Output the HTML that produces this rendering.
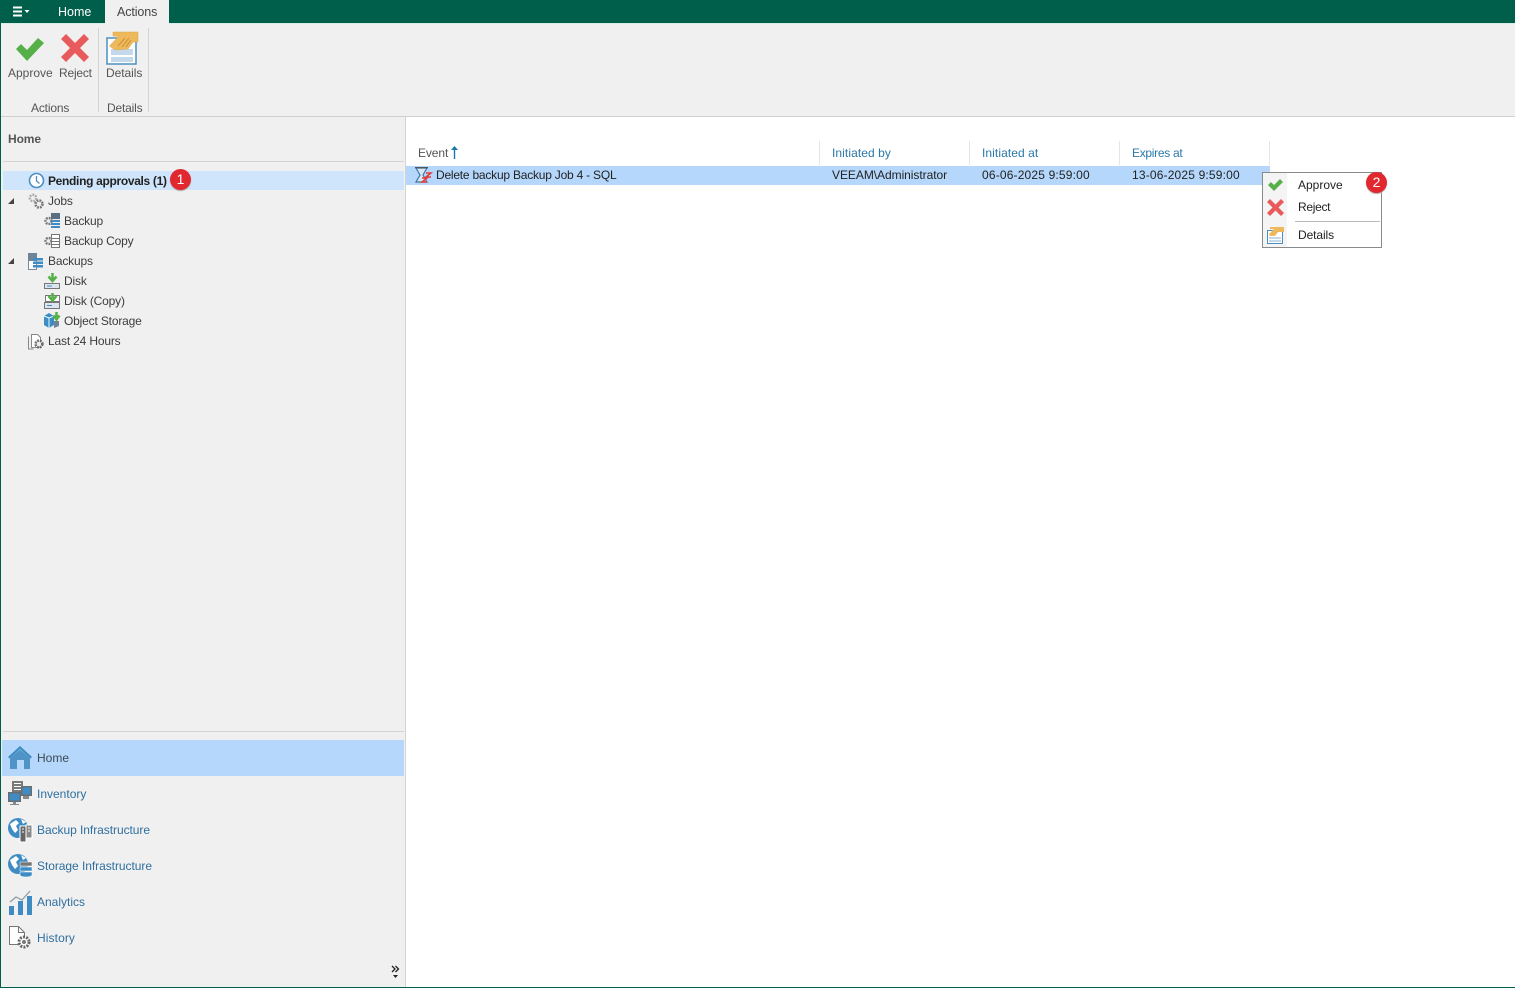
<!DOCTYPE html>
<html><head><meta charset="utf-8"><style>
html,body{margin:0;padding:0;background:#fff}
#r{position:relative;width:1515px;height:988px;overflow:hidden;background:#fff;font:12px "Liberation Sans",sans-serif;color:#3c3c3c}
#r div,#r svg{position:absolute}
.t{white-space:nowrap;line-height:14px}
.b{color:#2f6f9f}
.h{color:#2a78a8}
.k{color:#222}
.g{color:#555}
.s{letter-spacing:-.17px}
.n{width:21px;height:21px;border-radius:50%;background:#e0282e;color:#fff;font-size:14px;line-height:20px;text-align:center;box-shadow:0 1px 1px #aaa}
</style></head><body><div id="r">
<div style="left:0;top:0;width:1515px;height:23px;background:#005f4b"></div>
<div style="left:0;top:23px;width:1515px;height:94px;background:#f0f0f0;border-bottom:1px solid #cfcfcf;box-sizing:border-box"></div>
<div style="left:0;top:23px;width:1515px;height:1px;background:#d5eee8"></div>
<div style="left:0;top:117px;width:405px;height:871px;background:#f0f0f0;border-right:1px solid #d4d4d4"></div>
<div style="left:0;top:23px;width:1px;height:965px;background:#005f4b"></div>
<div style="left:0;top:987px;width:1515px;height:1px;background:#005f4b"></div>

<svg style="left:12px;top:6px" width="18" height="11"><path d="M1 .5h9v2H1zM1 4.500h9v2H1zM1 8.500h9v2H1z" fill="#fff"/><path d="M12.500 4h5l-2.500 3z" fill="#fff"/></svg>
<div class="t" style="left:58px;top:5px;color:#fff;font-size:12.500px">Home</div>
<div style="left:105px;top:0;width:64px;height:24px;background:#f0f0f0"></div>
<div class="t" style="left:117px;top:5px;color:#444;font-size:12.500px;letter-spacing:-.1px">Actions</div>

<svg style="left:15px;top:36px" width="30" height="26"><path d="M1 13l5-5 6 6L23 2l6 5-17 18z" fill="#55b047"/></svg>
<svg style="left:60px;top:33px" width="30" height="30"><path d="M6 1l9 9 9-9 5 5-9 9 9 9-5 5-9-9-9 9-5-5 9-9-9-9z" fill="#e85a5c"/></svg>
<div class="t g" style="left:8px;top:66px">Approve</div>
<div class="t g" style="left:59px;top:66px;letter-spacing:-.2px">Reject</div>
<div class="t g s" style="left:31px;top:101px">Actions</div>
<div style="left:98px;top:28px;width:1px;height:84px;background:#d4d4d4"></div>
<svg style="left:106px;top:31px" width="34" height="35"><rect x="1" y="7" width="29" height="26" fill="#fff" stroke="#4a8fc0" stroke-width="1.500"/><rect x="5" y="18" width="22" height="6" fill="#c4d8ec"/><rect x="5" y="26" width="22" height="5" fill="#c4d8ec"/><path d="M7 1h25v10h-5l-5 7-13 1-5.500-4L10 8l2-3H7z" fill="#eeb85d" stroke="#dda445" stroke-width=".5"/><path d="M12 15l7-8M16 16l7-9M20 16l5-7" stroke="#c99335" fill="none"/></svg>
<div class="t g" style="left:106px;top:66px;letter-spacing:-.05px">Details</div>
<div class="t g s" style="left:107px;top:101px">Details</div>
<div style="left:148px;top:28px;width:1px;height:84px;background:#d4d4d4"></div>

<div class="t" style="left:8px;top:132px;font-weight:bold;color:#555;font-size:12px;letter-spacing:-.1px">Home</div>
<div style="left:3px;top:161px;width:401px;height:1px;background:#d4d4d4"></div>
<div style="left:3px;top:171px;width:401px;height:19px;background:#cfe5fb"></div>
<svg style="left:28px;top:172px" width="17" height="17"><circle cx="8.500" cy="8.500" r="7" fill="#fff" stroke="#4a8fc0" stroke-width="1.600"/><path d="M8.500 4v5l3 2.500" fill="none" stroke="#4a8fc0" stroke-width="1.300"/></svg>
<div class="t k" style="left:48px;top:174px;font-weight:bold;letter-spacing:-.32px">Pending approvals (1)</div>
<div class="n" style="left:170px;top:169px">1</div>
<svg style="left:7px;top:197px" width="8" height="8"><path d="M7 1v6H1z" fill="#444"/></svg>
<svg style="left:7px;top:257px" width="8" height="8"><path d="M7 1v6H1z" fill="#444"/></svg>

<svg style="left:28px;top:193px" width="17" height="17"><circle cx="5" cy="5" r="3.200" fill="#eee" stroke="#aaa" stroke-width="2.400" stroke-dasharray="1.800 1"/><circle cx="11" cy="11" r="3.500" fill="#eee" stroke="#777" stroke-width="2.600" stroke-dasharray="1.800 1"/></svg>
<div class="t s" style="left:48px;top:194px">Jobs</div>
<svg style="left:44px;top:213px" width="17" height="16"><circle cx="4.500" cy="8" r="3" fill="#eee" stroke="#777" stroke-width="2.400" stroke-dasharray="1.800 1"/><rect x="7" y="0" width="9" height="6" fill="#5a6f80"/><path d="M7 7h9v2H7zM7 10h9v2H7zM7 13h9v2H7z" fill="#3f8cc4"/></svg>
<div class="t s" style="left:64px;top:214px">Backup</div>
<svg style="left:44px;top:233px" width="17" height="16"><circle cx="4.500" cy="8" r="3" fill="#eee" stroke="#777" stroke-width="2.400" stroke-dasharray="1.800 1"/><path d="M7.500 1.500h8v13h-8zM7.500 5.500h8M7.500 8.500h8M7.500 11.500h8" fill="#fff" stroke="#777"/></svg>
<div class="t s" style="left:64px;top:234px">Backup Copy</div>
<svg style="left:27px;top:253px" width="17" height="17"><rect x="1" y="0" width="9" height="7" fill="#6f8496"/><rect x="1.500" y="7.500" width="8" height="9" fill="#fff" stroke="#7a8a98"/><path d="M6 5h10v2.500H6zM6 8.500h10V11H6zM6 12h10v2.500H6z" fill="#3f8cc4"/></svg>
<div class="t s" style="left:48px;top:254px">Backups</div>
<svg style="left:44px;top:273px" width="17" height="16"><path d="M8.500 0v6M4.500 3.500l4 4.500 4-4.500" fill="none" stroke="#55b047" stroke-width="2.500"/><path d="M.5 10.500h15v5H.5z" fill="#dde6ee" stroke="#777"/><path d="M3 13h5" stroke="#3f8cc4"/></svg>
<div class="t s" style="left:64px;top:274px">Disk</div>
<svg style="left:44px;top:293px" width="17" height="17"><rect x="1.500" y="2.500" width="14" height="6" fill="#fff" stroke="#777"/><path d="M8.500 0v5M4.500 3l4 4.500 4-4.500" fill="none" stroke="#55b047" stroke-width="2.500"/><path d="M.5 9.500h15v6H.5z" fill="#dde6ee" stroke="#777"/><path d="M3 12.500h5" stroke="#3f8cc4"/></svg>
<div class="t s" style="left:64px;top:294px">Disk (Copy)</div>
<svg style="left:43px;top:312px" width="18" height="17"><path d="M1 4l5-3 5 3v9l-5 3-5-3z" fill="#3f8cc4"/><path d="M6 6v10M1 4l5 2 5-2" stroke="#dff" fill="none"/><path d="M11 9h5v5l-5 2z" fill="#6f8496"/><path d="M13.500 0v5M10.500 3.500l3 4 3-4" fill="none" stroke="#55b047" stroke-width="2.500"/></svg>
<div class="t s" style="left:64px;top:314px">Object Storage</div>
<svg style="left:28px;top:333px" width="17" height="17"><path d="M.5 3.500v12.500h5" fill="none" stroke="#888"/><path d="M3.500 1.500h6l3 3v10h-9z" fill="#fff" stroke="#888"/><circle cx="11" cy="11" r="3.400" fill="#eee" stroke="#666" stroke-width="2.500" stroke-dasharray="1.800 1"/></svg>
<div class="t s" style="left:48px;top:334px">Last 24 Hours</div>

<div style="left:3px;top:731px;width:401px;height:1px;background:#d4d4d4"></div>
<div style="left:2px;top:740px;width:402px;height:36px;background:#b5d7fb"></div>
<svg style="left:8px;top:746px" width="24" height="24"><path d="M0 11L12 0l12 11-1.500 1.500L12 3 1.500 12.500z" fill="#3f8cc4"/><path d="M2 12l10-8.500L22 12v11h-6v-9H9v9H2z" fill="#4f94c4"/></svg>
<div class="t" style="left:37px;top:751px;color:#3c4a55">Home</div>
<svg style="left:8px;top:781px" width="25" height="26"><rect x="4" y="0" width="11" height="11" fill="#7a7a7a"/><path d="M6 2h7v1H6zM6 5h7v1H6zM6 8h7v1H6z" fill="#fff"/><rect x="13" y="5" width="11" height="10" fill="#666e74"/><rect x="14.500" y="6.500" width="8" height="7" fill="#3f8cc4"/><path d="M15 15h6v3h-6z" fill="#888"/><rect x="0" y="11" width="13" height="10" fill="#666e74"/><rect x="1.500" y="12.500" width="10" height="7" fill="#3f8cc4"/><path d="M5 21h3v2h3v1H2v-1h3z" fill="#888"/></svg>
<div class="t b" style="left:37px;top:787px">Inventory</div>
<svg style="left:8px;top:817px" width="25" height="26"><circle cx="10" cy="11" r="10" fill="#3f8cc4"/><path d="M2 7l6-4 3 3-3 3 2 4-3 3-3-4zM13 2l5 3-3 2zM13 11l4 1-2 4z" fill="#fff"/><rect x="12" y="9" width="6" height="16" fill="#666" stroke="#fff"/><rect x="18" y="8" width="6" height="13" fill="#888" stroke="#fff"/><path d="M14 12h2M14 15h2M20 11h2M20 14h2" stroke="#fff"/></svg>
<div class="t b" style="left:37px;top:823px;letter-spacing:-.05px">Backup Infrastructure</div>
<svg style="left:8px;top:853px" width="25" height="26"><circle cx="10" cy="11" r="10" fill="#3f8cc4"/><path d="M2 7l6-4 3 3-3 3 2 4-3 3-3-4zM13 2l5 3-3 2z" fill="#fff"/><path d="M12 9h12v4H12z" fill="#777" stroke="#fff" stroke-width=".5"/><path d="M12 14h12v4H12zM12 19h12v3a6 2 0 0 1-12 0z" fill="#3f8cc4" stroke="#fff" stroke-width=".5"/></svg>
<div class="t b" style="left:37px;top:859px;letter-spacing:-.05px">Storage Infrastructure</div>
<svg style="left:9px;top:890px" width="23" height="25"><path d="M0 16h5v9H0zM9 11h5v14H9zM18 6h5v19h-5z" fill="#3f8cc4"/><path d="M1 12l6-5 6 3 8-9" fill="none" stroke="#8a9aa6" stroke-width="1.200"/></svg>
<div class="t b" style="left:37px;top:895px">Analytics</div>
<svg style="left:9px;top:926px" width="24" height="25"><path d="M.5.500h9l6 6v12H.5z" fill="#fff" stroke="#777"/><path d="M9.500.500v6h6" fill="none" stroke="#777"/><circle cx="15" cy="16" r="5" fill="#fff" stroke="#666" stroke-width="3" stroke-dasharray="2 1.200"/><circle cx="15" cy="16" r="2" fill="#777"/></svg>
<div class="t b" style="left:37px;top:931px;letter-spacing:.1px">History</div>
<svg style="left:391px;top:965px" width="10" height="14"><path d="M1 1l3 3-3 3M4.500 1l3 3-3 3" fill="none" stroke="#222" stroke-width="1.300"/><path d="M2 10h5l-2.500 3z" fill="#222"/></svg>

<div class="t g" style="left:418px;top:146px;letter-spacing:-.1px">Event</div>
<svg style="left:450px;top:146px" width="9" height="13"><path d="M4.500 0L8 4H5.200v9H3.800V4H1z" fill="#1a78aa"/></svg>
<div style="left:819px;top:141px;width:1px;height:24px;background:#e5e5e5"></div>
<div style="left:969px;top:141px;width:1px;height:24px;background:#e5e5e5"></div>
<div style="left:1119px;top:141px;width:1px;height:24px;background:#e5e5e5"></div>
<div style="left:1269px;top:141px;width:1px;height:24px;background:#e5e5e5"></div>
<div class="t h" style="left:832px;top:146px;letter-spacing:.08px">Initiated by</div>
<div class="t h" style="left:982px;top:146px;letter-spacing:.08px">Initiated at</div>
<div class="t h" style="left:1132px;top:146px;letter-spacing:-.3px">Expires at</div>
<div style="left:406px;top:166px;width:864px;height:19px;background:#b5d7fb"></div>
<svg style="left:415px;top:167px" width="18" height="17"><path d="M1 1h11L8 8l4 7H1l4-7z" fill="#d6e6f2" stroke="#3f78a8" stroke-width="1.200"/><path d="M0 .5h13" stroke="#555" stroke-width="1.500"/><path d="M11 6h5l-5 4h5M7 11h5l-5 4h5" fill="none" stroke="#e43b3b" stroke-width="1.500"/></svg>
<div class="t k" style="left:436px;top:168px;letter-spacing:-.22px">Delete backup Backup Job 4 - SQL</div>
<div class="t k" style="left:832px;top:168px;letter-spacing:-.05px">VEEAM\Administrator</div>
<div class="t k" style="left:982px;top:168px;letter-spacing:.17px">06-06-2025 9:59:00</div>
<div class="t k" style="left:1132px;top:168px;letter-spacing:.17px">13-06-2025 9:59:00</div>

<div style="left:1262px;top:172px;width:118px;height:74px;background:#fff;border:1px solid #8a8a8a"></div>
<div style="left:1263px;top:173px;width:24px;height:74px;background:#f4f4f4"></div>
<svg style="left:1268px;top:178px" width="15" height="13"><path d="M0 7l3-3 3 3 6-6 3 3-9 9z" fill="#55b047"/></svg>
<svg style="left:1267px;top:199px" width="17" height="17"><path d="M3 0l5.500 5.500L14 0l3 3-5.500 5.500L17 14l-3 3-5.500-5.500L3 17l-3-3 5.500-5.500L0 3z" fill="#e85a5c"/></svg>
<svg style="left:1267px;top:227px" width="17" height="17"><rect x=".5" y="3.500" width="15" height="13" fill="#fff" stroke="#4a8fc0"/><rect x="2" y="10" width="12" height="2" fill="#c4d8ec"/><rect x="2" y="13" width="12" height="2" fill="#c4d8ec"/><path d="M3 0h14v5h-6l-3 4-5 0-1-2 4-4 1-1H3z" fill="#eeb85d"/></svg>
<div class="t k" style="left:1298px;top:178px">Approve</div>
<div class="t k" style="left:1298px;top:200px;letter-spacing:-.3px">Reject</div>
<div style="left:1295px;top:221px;width:85px;height:1px;background:#bbb"></div>
<div class="t k" style="left:1298px;top:228px;letter-spacing:-.1px">Details</div>
<div class="n" style="left:1366px;top:172px">2</div>
</div></body></html>
